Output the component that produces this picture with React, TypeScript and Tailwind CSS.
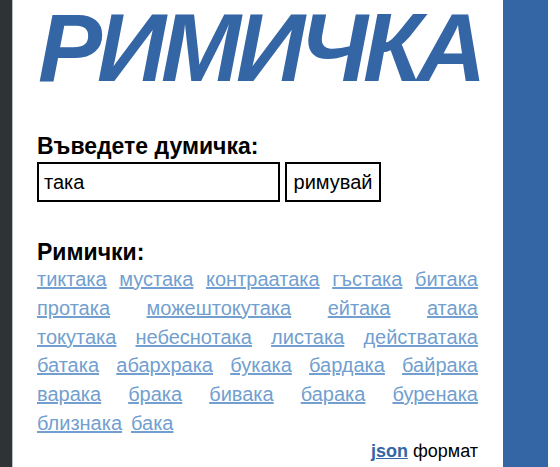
const RHYMES: string[][] = [
  ["тиктака", "мустака", "контраатака", "гъстака", "битака"],
  ["протака", "можештокутака", "ейтака", "атака"],
  ["токутака", "небеснотака", "листака", "действатака"],
  ["батака", "абархрака", "букака", "бардака", "байрака"],
  ["варака", "брака", "бивака", "барака", "буренака"],
  ["близнака", "бака"],
];

export default function App() {
  return (
    <div className="w-[560px] h-[467px] flex bg-white overflow-hidden font-['Liberation_Sans',Arial,sans-serif] text-black">
      <div className="w-[13px] shrink-0 bg-[#2e3436] border-r border-[#b9c0c4]" />

      <main className="w-[490px] shrink-0 pl-[24px] pr-[25px]">
        {/* title overhangs a bit on the right, let its box grow into the padding */}
        <h1 className="-mr-[24px] text-[96px] leading-none font-bold italic text-[#3465a4] tracking-[-5px] whitespace-nowrap pl-[1px]">
          РИМИЧКА
        </h1>

        <h2 className="mt-[37px] text-[23px] leading-[26px] font-bold">Въведете думичка:</h2>
        <form className="mt-[3px] flex gap-[5px]" onSubmit={(e) => e.preventDefault()}>
          <input
            defaultValue="така"
            className="w-[243px] h-[40px] border-2 border-black px-[5px] text-[20px] outline-none"
          />
          <button type="submit" className="w-[96px] h-[40px] border-2 border-black text-[20px] bg-white">
            римувай
          </button>
        </form>

        <h2 className="mt-[37px] text-[23px] leading-[26px] font-bold">Римички:</h2>
        <div className="text-[20px] leading-[28.8px]">
          {RHYMES.map((line, i) => (
            <div
              key={i}
              className={i === RHYMES.length - 1 ? "flex gap-[9px]" : "flex justify-between"}
            >
              {line.map((w) => (
                <a key={w} href="#" className="text-[#729fcf] underline">
                  {w}
                </a>
              ))}
            </div>
          ))}
        </div>

        <p className="mt-[2px] text-right text-[18px] leading-[22px]">
          <a href="#" className="font-bold text-[#3465a4] underline">json</a> формат
        </p>
      </main>

      <div className="w-[45px] shrink-0 bg-[#3465a4]" />
      <div className="flex-1 bg-white" />
    </div>
  );
}
